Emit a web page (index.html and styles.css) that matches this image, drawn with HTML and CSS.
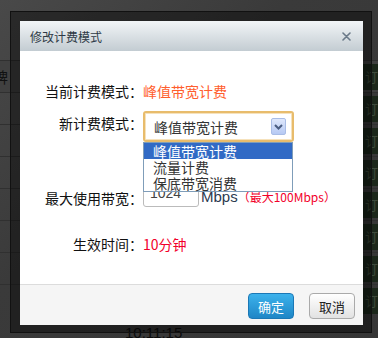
FILE: index.html
```html
<!DOCTYPE html>
<html lang="zh-CN">
<head>
    <meta charset="UTF-8">
    <meta name="viewport" content="width=device-width, initial-scale=1.0">
    <title>修改计费模式</title>
    <link rel="stylesheet" href="styles.css">
</head>
<body>
    <div class="page">
        <div class="page-row"><span class="page-cell">牌</span><span class="page-op">订</span></div>
        <div class="page-row"><span class="page-cell"></span><span class="page-op">订</span></div>
        <div class="page-row"><span class="page-cell"></span><span class="page-op">订</span></div>
        <div class="page-row"><span class="page-cell"></span><span class="page-op">订</span></div>
        <div class="page-row"><span class="page-cell"></span><span class="page-op">订</span></div>
        <div class="page-row"><span class="page-cell"></span><span class="page-op">订</span></div>
        <div class="page-row"><span class="page-cell"></span><span class="page-op">订</span></div>
        <div class="page-row"><span class="page-cell"></span><span class="page-op">订</span></div>
        <div class="page-time">10:11:15</div>
    </div>

    <div class="modal-frame">
        <div class="modal">
            <div class="modal-header">
                <span class="modal-title">修改计费模式</span>
                <span class="close">
                    <svg width="9" height="9" viewBox="0 0 9 9">
                        <path d="M1 1 L8 8 M8 1 L1 8" stroke="#6b7a89" stroke-width="1.6" stroke-linecap="round"/>
                    </svg>
                </span>
            </div>

            <div class="modal-body">
                <div class="form-row row-current">
                    <span class="form-label">当前计费模式：</span>
                    <span class="text-orange">峰值带宽计费</span>
                </div>

                <div class="form-row row-mode">
                    <span class="form-label">新计费模式：</span>
                    <div class="select">
                        <span class="select-text">峰值带宽计费</span>
                        <span class="select-btn">
                            <svg width="9" height="6" viewBox="0 0 9 6">
                                <path d="M1 1 L4.5 4.5 L8 1" fill="none" stroke="#4a5d82" stroke-width="2"/>
                            </svg>
                        </span>
                        <ul class="dropdown">
                            <li class="selected">峰值带宽计费</li>
                            <li>流量计费</li>
                            <li>保底带宽消费</li>
                        </ul>
                    </div>
                </div>

                <div class="form-row row-bandwidth">
                    <span class="form-label">最大使用带宽：</span>
                    <span class="input">1024</span>
                    <span class="unit">Mbps</span>
                    <span class="text-red small">（最大100Mbps）</span>
                </div>

                <div class="form-row row-time">
                    <span class="form-label">生效时间：</span>
                    <span class="text-red">10分钟</span>
                </div>
            </div>

            <div class="modal-footer">
                <button class="btn btn-primary">确定</button>
                <button class="btn">取消</button>
            </div>
        </div>
    </div>
</body>
</html>
```

FILE: styles.css
```css
body {
    margin: 0;
    width: 378px;
    height: 338px;
    overflow: hidden;
    position: relative;
    font-family: "Noto Sans CJK SC", "Liberation Sans", sans-serif;
    background: linear-gradient(135deg, #494949 0%, #3a3a3a 40%, #363636 100%);
}
.page {
    padding-top: 60px;
}
.page-row {
    height: 31px;
    border-top: 1px solid #303030;
    display: flex;
    justify-content: space-between;
    align-items: center;
}
.page-row:first-child {
    background-color: #404040;
}
.page-cell {
    margin-left: -7px;
    font-size: 15px;
    color: #111;
}
.page-op {
    width: 24px;
    height: 26px;
    margin-right: -11px;
    background-color: #1b271a;
    color: #3d4a3c;
    font-size: 13px;
    line-height: 26px;
    padding-left: 3px;
}
.page-time {
    position: absolute;
    left: 125px;
    top: 324px;
    font-family: "Liberation Sans", sans-serif;
    font-size: 15px;
    color: #0c0c0c;
}
.modal-frame {
    position: absolute;
    left: 10px;
    top: 11px;
    width: 342px;
    height: 302px;
    padding: 9px;
    background-color: rgba(0, 0, 0, 0.42);
    border: 1px solid #111;
}
.modal {
    width: 343px;
    height: 304px;
    background-color: white;
    display: flex;
    flex-direction: column;
}
.modal-header {
    height: 30px;
    background: linear-gradient(to bottom, #f2f5f7, #c3ccd2);
    display: flex;
    align-items: center;
    justify-content: space-between;
    padding: 0 10px 0 10px;
}
.modal-title {
    font-size: 12px;
    color: #2f3a46;
}
.close {
    display: flex;
    margin-right: 2px;
}
.modal-body {
    flex: 1;
    padding-top: 30px;
    font-size: 14px;
    color: #111;
}
.form-row {
    display: flex;
    align-items: center;
    height: 20px;
}
.form-label {
    width: 123px;
    text-align: right;
}
.text-orange {
    color: #ff5e2e;
}
.text-red {
    color: #f2002a;
}
.small {
    font-size: 12px;
}
.row-mode {
    margin-top: 10px;
    height: 31px;
    align-items: flex-start;
}
.row-mode .form-label {
    line-height: 24px;
}
.select {
    position: relative;
    width: 147px;
    height: 27px;
    border: 2px solid #e8bc6c;
    border-radius: 3px;
    display: flex;
    align-items: center;
    justify-content: space-between;
    box-shadow: inset 0 0 0 1px #f6e2bc;
}
.select-text {
    font-size: 14px;
    color: #333;
    padding-left: 9px;
}
.select-btn {
    width: 13px;
    height: 15px;
    margin-right: 6px;
    border: 1px solid #a9bde6;
    border-radius: 2px;
    background: linear-gradient(to bottom, #dfe8fc, #b6c9f3);
    display: flex;
    align-items: center;
    justify-content: center;
}
.dropdown {
    position: absolute;
    left: -2px;
    top: 29px;
    width: 148px;
    margin: 0;
    padding: 0;
    list-style: none;
    background-color: white;
    border: 1px solid #7f9db9;
    z-index: 2;
}
.dropdown li {
    height: 16px;
    line-height: 16px;
    font-size: 14px;
    color: #333;
    padding-left: 9px;
}
.dropdown li.selected {
    background-color: #316ac5;
    color: white;
}
.row-bandwidth {
    margin-top: 43px;
    height: 22px;
}
.row-bandwidth .form-label {
    padding-top: 3px;
}
.input {
    width: 48px;
    height: 20px;
    border: 1px solid #bbb;
    border-radius: 3px;
    font-family: "Liberation Sans", sans-serif;
    font-size: 14px;
    color: #444;
    line-height: 14px;
    padding-left: 6px;
    margin-right: 2px;
}
.unit {
    font-family: "Liberation Sans", sans-serif;
    font-size: 15px;
    color: #2b3a4f;
}
.row-time {
    margin-top: 27px;
}
.modal-footer {
    height: 41px;
    background-color: #f5f5f5;
    border-top: 1px solid #dcdcdc;
    display: flex;
    justify-content: flex-end;
    align-items: flex-start;
    padding: 8px 8px 0 0;
    box-sizing: border-box;
    gap: 15px;
}
.btn {
    width: 46px;
    height: 26px;
    border: 1px solid #aaa;
    border-radius: 4px;
    background: linear-gradient(to bottom, #ffffff, #e2e2e2);
    font-family: "Noto Sans CJK SC", sans-serif;
    font-size: 13px;
    color: #222;
    padding: 0;
}
.btn-primary {
    border-color: #1b78b6;
    background: linear-gradient(to bottom, #3cb2ec, #1f86c6);
    color: white;
}
```
